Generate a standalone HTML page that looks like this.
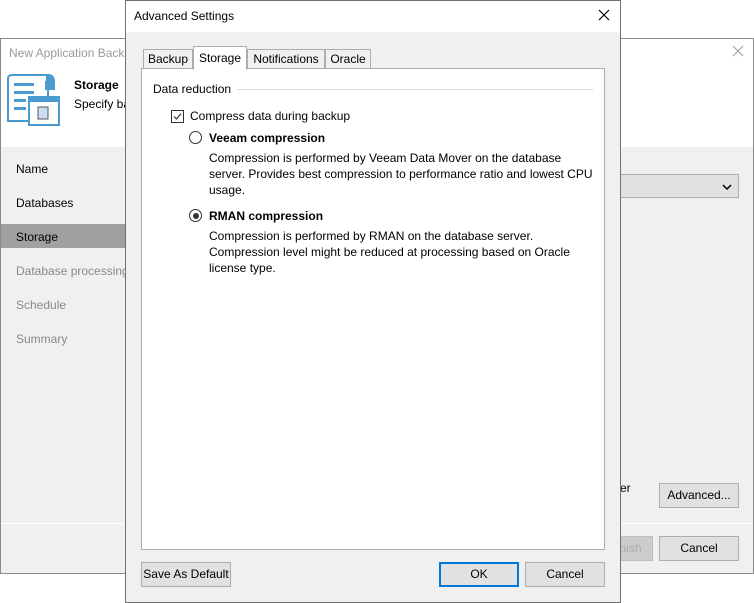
<!DOCTYPE html>
<html><head><meta charset="utf-8"><style>
*{box-sizing:border-box;margin:0;padding:0}
body{width:754px;height:603px;background:#fff;position:relative;overflow:hidden;font-family:"Liberation Sans",sans-serif;font-size:12px;color:#000}
.a{position:absolute}
.btn{position:absolute;background:#e1e1e1;border:1px solid #adadad;text-align:center;line-height:23px;font-size:12px}
.nav{position:absolute;left:16px;font-size:12px}
</style></head><body>
<div class="a" style="left:0;top:38px;width:754px;height:536px;background:#f0f0f0;border:1px solid #8a8a8a"></div>
<div class="a" style="left:1px;top:39px;width:752px;height:108px;background:#fff"></div>
<div class="a" style="left:9px;top:46px;color:#999;font-size:12px">New Application Backup Job</div>
<svg class="a" style="left:732px;top:45px" width="12" height="12"><path d="M1 1L11 11M11 1L1 11" stroke="#999" stroke-width="1"/></svg>
<svg class="a" style="left:6px;top:73px" width="54" height="54" viewBox="0 0 54 54">
<path d="M2 6 Q2 2 6 2 H42 Q48 2 48 9 V16 H40 V8" fill="none" stroke="#4a9bd0" stroke-width="2"/>
<path d="M40 2 Q48 2 48 9 V16 H40Z" fill="#4a9bd0"/>
<path d="M2 6 V48 H30 M42 16 V26" fill="none" stroke="#4a9bd0" stroke-width="2"/>
<rect x="8" y="10" width="20" height="3" fill="#4a9bd0"/><rect x="8" y="18" width="20" height="3" fill="#4a9bd0"/><rect x="8" y="26" width="12" height="3" fill="#4a9bd0"/><rect x="8" y="34" width="12" height="3" fill="#4a9bd0"/>
<rect x="23" y="24" width="30" height="28" fill="#fff" stroke="#4a9bd0" stroke-width="2"/><rect x="23" y="24" width="30" height="5" fill="#4a9bd0"/>
<rect x="32" y="34" width="10" height="12" fill="#c9def0" stroke="#555" stroke-width="1"/>
</svg>
<div class="a" style="left:74px;top:78px;font-weight:bold;font-size:12px">Storage</div>
<div class="a" style="left:74px;top:97px">Specify backup repository, and configure backup settings if requried.</div>
<div class="a" style="left:1px;top:224px;width:124px;height:24px;background:#a0a0a0"></div>
<div class="nav" style="top:162px">Name</div>
<div class="nav" style="top:196px">Databases</div>
<div class="nav" style="top:230px">Storage</div>
<div class="nav" style="top:264px;color:#888">Database processing</div>
<div class="nav" style="top:298px;color:#888">Schedule</div>
<div class="nav" style="top:332px;color:#888">Summary</div>
<div class="a" style="left:600px;top:174px;width:139px;height:24px;background:#e1e1e1;border:1px solid #adadad"></div>
<svg class="a" style="left:722px;top:184px" width="10" height="6"><path d="M1 1L5 5L9 1" stroke="#000" stroke-width="1.5" fill="none"/></svg>
<div class="a" style="left:620px;top:481px">er</div>
<div class="btn" style="left:659px;top:483px;width:80px;height:25px">Advanced...</div>
<div class="a" style="left:1px;top:523px;width:752px;height:1px;background:#fff"></div>
<div class="btn" style="left:598px;top:536px;width:55px;height:25px;background:#ccc;border-color:#bfbfbf;color:#aaa">Finish</div>
<div class="btn" style="left:659px;top:536px;width:80px;height:25px">Cancel</div>
<div class="a" style="left:125px;top:0;width:496px;height:603px;background:#f0f0f0;border:1px solid #707070"></div>
<div class="a" style="left:126px;top:1px;width:494px;height:31px;background:#fff"></div>
<div class="a" style="left:134px;top:9px">Advanced Settings</div>
<svg class="a" style="left:598px;top:9px" width="12" height="12"><path d="M1 1L11 11M11 1L1 11" stroke="#000" stroke-width="1.2"/></svg>
<div class="a" style="left:141px;top:68px;width:464px;height:482px;background:#fff;border:1px solid #adadad"></div>
<div class="a" style="left:143px;top:49px;width:50px;height:20px;background:#f0f0f0;border:1px solid #adadad;text-align:center;line-height:18px">Backup</div>
<div class="a" style="left:247px;top:49px;width:78px;height:20px;background:#f0f0f0;border:1px solid #adadad;text-align:center;line-height:18px">Notifications</div>
<div class="a" style="left:325px;top:49px;width:46px;height:20px;background:#f0f0f0;border:1px solid #adadad;text-align:center;line-height:18px">Oracle</div>
<div class="a" style="left:193px;top:46px;width:54px;height:24px;background:#fff;border:1px solid #adadad;border-bottom:none;text-align:center;line-height:22px">Storage</div>
<div class="a" style="left:153px;top:82px">Data reduction</div>
<div class="a" style="left:237px;top:89px;width:356px;height:1px;background:#dcdcdc"></div>
<div class="a" style="left:171px;top:110px;width:13px;height:13px;border:1px solid #333"></div>
<svg class="a" style="left:173px;top:112px" width="9" height="9"><path d="M1 4.5L3.5 7L8 1.5" stroke="#333" stroke-width="1.2" fill="none"/></svg>
<div class="a" style="left:190px;top:109px">Compress data during backup</div>
<div class="a" style="left:189px;top:131px;width:13px;height:13px;border:1px solid #333;border-radius:50%"></div>
<div class="a" style="left:209px;top:131px;font-weight:bold">Veeam compression</div>
<div class="a" style="left:209px;top:150px;line-height:16px;width:390px">Compression is performed by Veeam Data Mover on the database server. Provides best compression to performance ratio and lowest CPU usage.</div>
<div class="a" style="left:189px;top:209px;width:13px;height:13px;border:1px solid #333;border-radius:50%"><div class="a" style="left:2.5px;top:2.5px;width:6px;height:6px;border-radius:50%;background:#333"></div></div>
<div class="a" style="left:209px;top:209px;font-weight:bold">RMAN compression</div>
<div class="a" style="left:209px;top:228px;line-height:16px;width:370px">Compression is performed by RMAN on the database server. Compression level might be reduced at processing based on Oracle license type.</div>
<div class="btn" style="left:141px;top:562px;width:90px;height:25px">Save As Default</div>
<div class="btn" style="left:439px;top:562px;width:80px;height:25px;border:2px solid #0078d7;line-height:21px">OK</div>
<div class="btn" style="left:525px;top:562px;width:80px;height:25px">Cancel</div>
</body></html>
